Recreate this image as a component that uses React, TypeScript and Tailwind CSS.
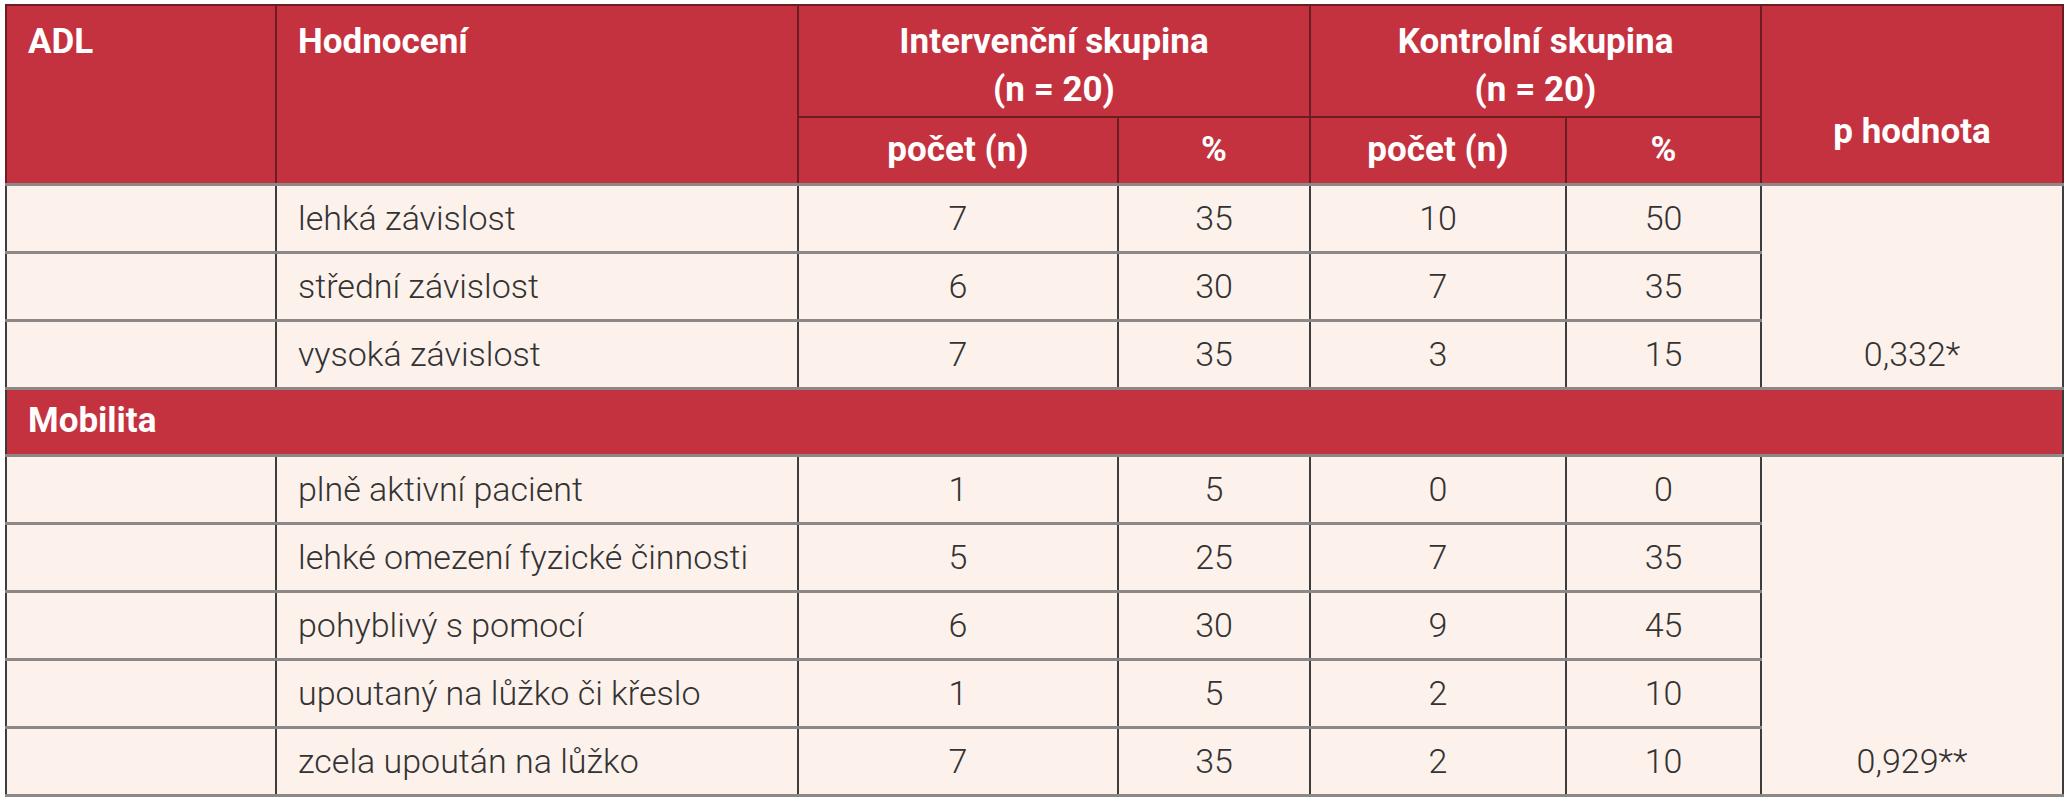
const groupA = [
  ["lehká závislost", "7", "35", "10", "50"],
  ["střední závislost", "6", "30", "7", "35"],
  ["vysoká závislost", "7", "35", "3", "15"],
];

const groupB = [
  ["plně aktivní pacient", "1", "5", "0", "0"],
  ["lehké omezení fyzické činnosti", "5", "25", "7", "35"],
  ["pohyblivý s pomocí", "6", "30", "9", "45"],
  ["upoutaný na lůžko či křeslo", "1", "5", "2", "10"],
  ["zcela upoután na lůžko", "7", "35", "2", "10"],
];

const th = "bg-[#c5323f] text-white font-bold text-[35px] border-2 border-[#6e1c24]";
const td = "bg-[#fdf1ec] h-[68px] border-x-2 border-y-[3px] border-x-[#3d3d3d] border-y-[#8c8888] align-middle";

function Rows({ rows, p }: { rows: string[][]; p: string }) {
  return (
    <>
      {rows.map((r, i) => (
        <tr key={r[0]}>
          <td className={td}></td>
          <td className={`${td} pl-[21px] text-left`}>{r[0]}</td>
          <td className={`${td} text-center`}>{r[1]}</td>
          <td className={`${td} text-center`}>{r[2]}</td>
          <td className={`${td} text-center`}>{r[3]}</td>
          <td className={`${td} text-center`}>{r[4]}</td>
          {i === 0 && (
            <td rowSpan={rows.length} className="bg-[#fdf1ec] border-x-2 border-y-[3px] border-x-[#3d3d3d] border-y-[#8c8888] align-bottom text-center leading-[66px]">
              {p}
            </td>
          )}
        </tr>
      ))}
    </>
  );
}

export default function App() {
  return (
    <div className="w-[2069px] h-[800px] bg-white pt-[4px] pl-[5px] font-['Roboto',sans-serif] text-[34px] text-[#333] font-light">
      <table className="table-fixed border-collapse w-[2057px] border-2 border-[#3a3a3a]">
        <colgroup>
          <col className="w-[270px]" />
          <col className="w-[522px]" />
          <col className="w-[320px]" />
          <col className="w-[192px]" />
          <col className="w-[256px]" />
          <col className="w-[195px]" />
          <col className="w-[302px]" />
        </colgroup>
        <thead>
          <tr>
            <th rowSpan={2} className={`${th} align-top text-left pl-[21px] pt-[12px] leading-[48px]`}>ADL</th>
            <th rowSpan={2} className={`${th} align-top text-left pl-[21px] pt-[12px] leading-[48px]`}>Hodnocení</th>
            <th colSpan={2} className={`${th} h-[112px] align-top text-center pt-[12px] leading-[48px]`}>
              Intervenční skupina
              <br />
              (n = 20)
            </th>
            <th colSpan={2} className={`${th} align-top text-center pt-[12px] leading-[48px]`}>
              Kontrolní skupina
              <br />
              (n = 20)
            </th>
            <th rowSpan={2} className={`${th} align-bottom text-center pb-[27px] leading-[48px]`}>p hodnota</th>
          </tr>
          <tr>
            <th className={`${th} h-[67px] text-center`}>počet (n)</th>
            <th className={`${th} text-center`}>%</th>
            <th className={`${th} text-center`}>počet (n)</th>
            <th className={`${th} text-center`}>%</th>
          </tr>
        </thead>
        <tbody>
          <Rows rows={groupA} p="0,332*" />
          <tr>
            <td colSpan={7} className="bg-[#c5323f] text-white font-bold text-[35px] h-[67px] pl-[21px] border-y-2 border-[#6e1c24]">
              Mobilita
            </td>
          </tr>
          <Rows rows={groupB} p="0,929**" />
        </tbody>
      </table>
    </div>
  );
}
